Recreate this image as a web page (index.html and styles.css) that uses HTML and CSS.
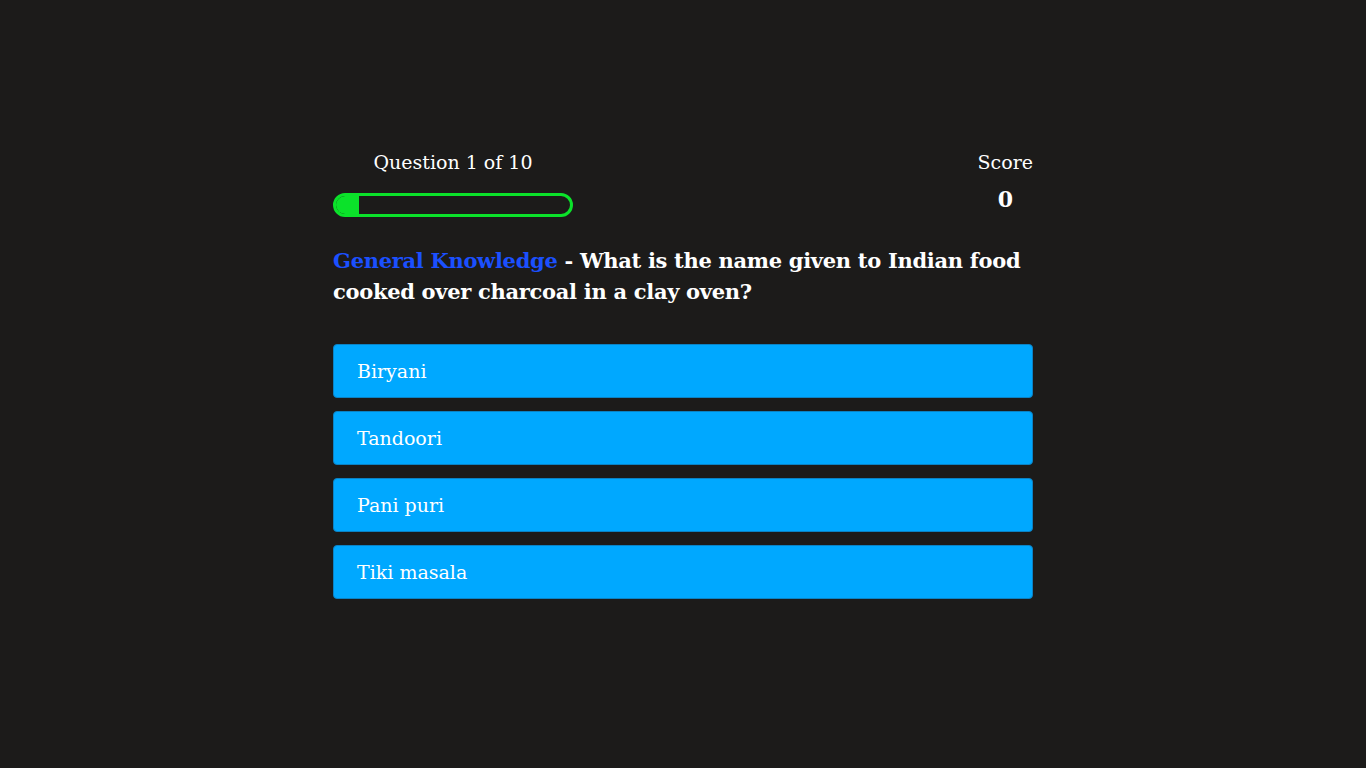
FILE: index.html
```html
<!DOCTYPE html>
<html lang="en">
<head>
<meta charset="utf-8">
<title>Quiz</title>
<link rel="stylesheet" href="styles.css">
</head>
<body>
<div class="container">
  <div class="game">
    <div class="hud">
      <div class="hud-item hud-left">
        <p class="hud-prefix">Question 1 of 10</p>
        <div class="progress-bar">
          <div class="progress-fill" style="width: 10%"></div>
        </div>
      </div>
      <div class="hud-item hud-right">
        <p class="hud-prefix">Score</p>
        <p class="hud-main">0</p>
      </div>
    </div>
    <h2 class="question"><span class="category">General Knowledge</span> - What is the name given to Indian food cooked over charcoal in a clay oven?</h2>
    <div class="choices">
      <div class="choice"><p class="choice-text">Biryani</p></div>
      <div class="choice"><p class="choice-text">Tandoori</p></div>
      <div class="choice"><p class="choice-text">Pani puri</p></div>
      <div class="choice"><p class="choice-text">Tiki masala</p></div>
    </div>
  </div>
</div>
</body>
</html>
```
FILE: styles.css
```css
* { box-sizing: border-box; }
html, body { margin: 0; padding: 0; }
body {
  background: #1c1b1a;
  color: #ffffff;
  font-family: "DejaVu Serif", "Liberation Serif", serif;
  min-height: 100vh;
}
.container {
  width: 700px;
  margin: 0 auto;
  padding-top: 150px;
}
.hud {
  display: flex;
  justify-content: space-between;
  align-items: flex-start;
}
.hud-item {
  display: flex;
  flex-direction: column;
  align-items: center;
}
.hud-prefix {
  margin: 0;
  font-size: 19px;
  line-height: 24px;
  height: 24px;
}
.hud-left .hud-prefix { margin-bottom: 19px; }
.progress-bar {
  width: 240px;
  height: 24px;
  border: 3px solid #0be22a;
  border-radius: 12px;
  overflow: hidden;
}
.progress-fill {
  height: 100%;
  background: #0be22a;
}
.hud-main {
  margin: 12px 0 0;
  font-size: 22px;
  font-weight: bold;
  line-height: 26px;
}
.question {
  margin: 28px 0 37px;
  font-size: 21px;
  letter-spacing: -0.3px;
  line-height: 31px;
  font-weight: bold;
}
.category { color: #1b50ff; }
.choices {
  display: flex;
  flex-direction: column;
  gap: 13px;
}
.choice {
  height: 54px;
  background: #00a8ff;
  border: 1px solid #0b82c4;
  border-radius: 4px;
  display: flex;
  align-items: center;
  padding-left: 23px;
}
.choice-text {
  margin: 0;
  font-size: 19px;
}
```
